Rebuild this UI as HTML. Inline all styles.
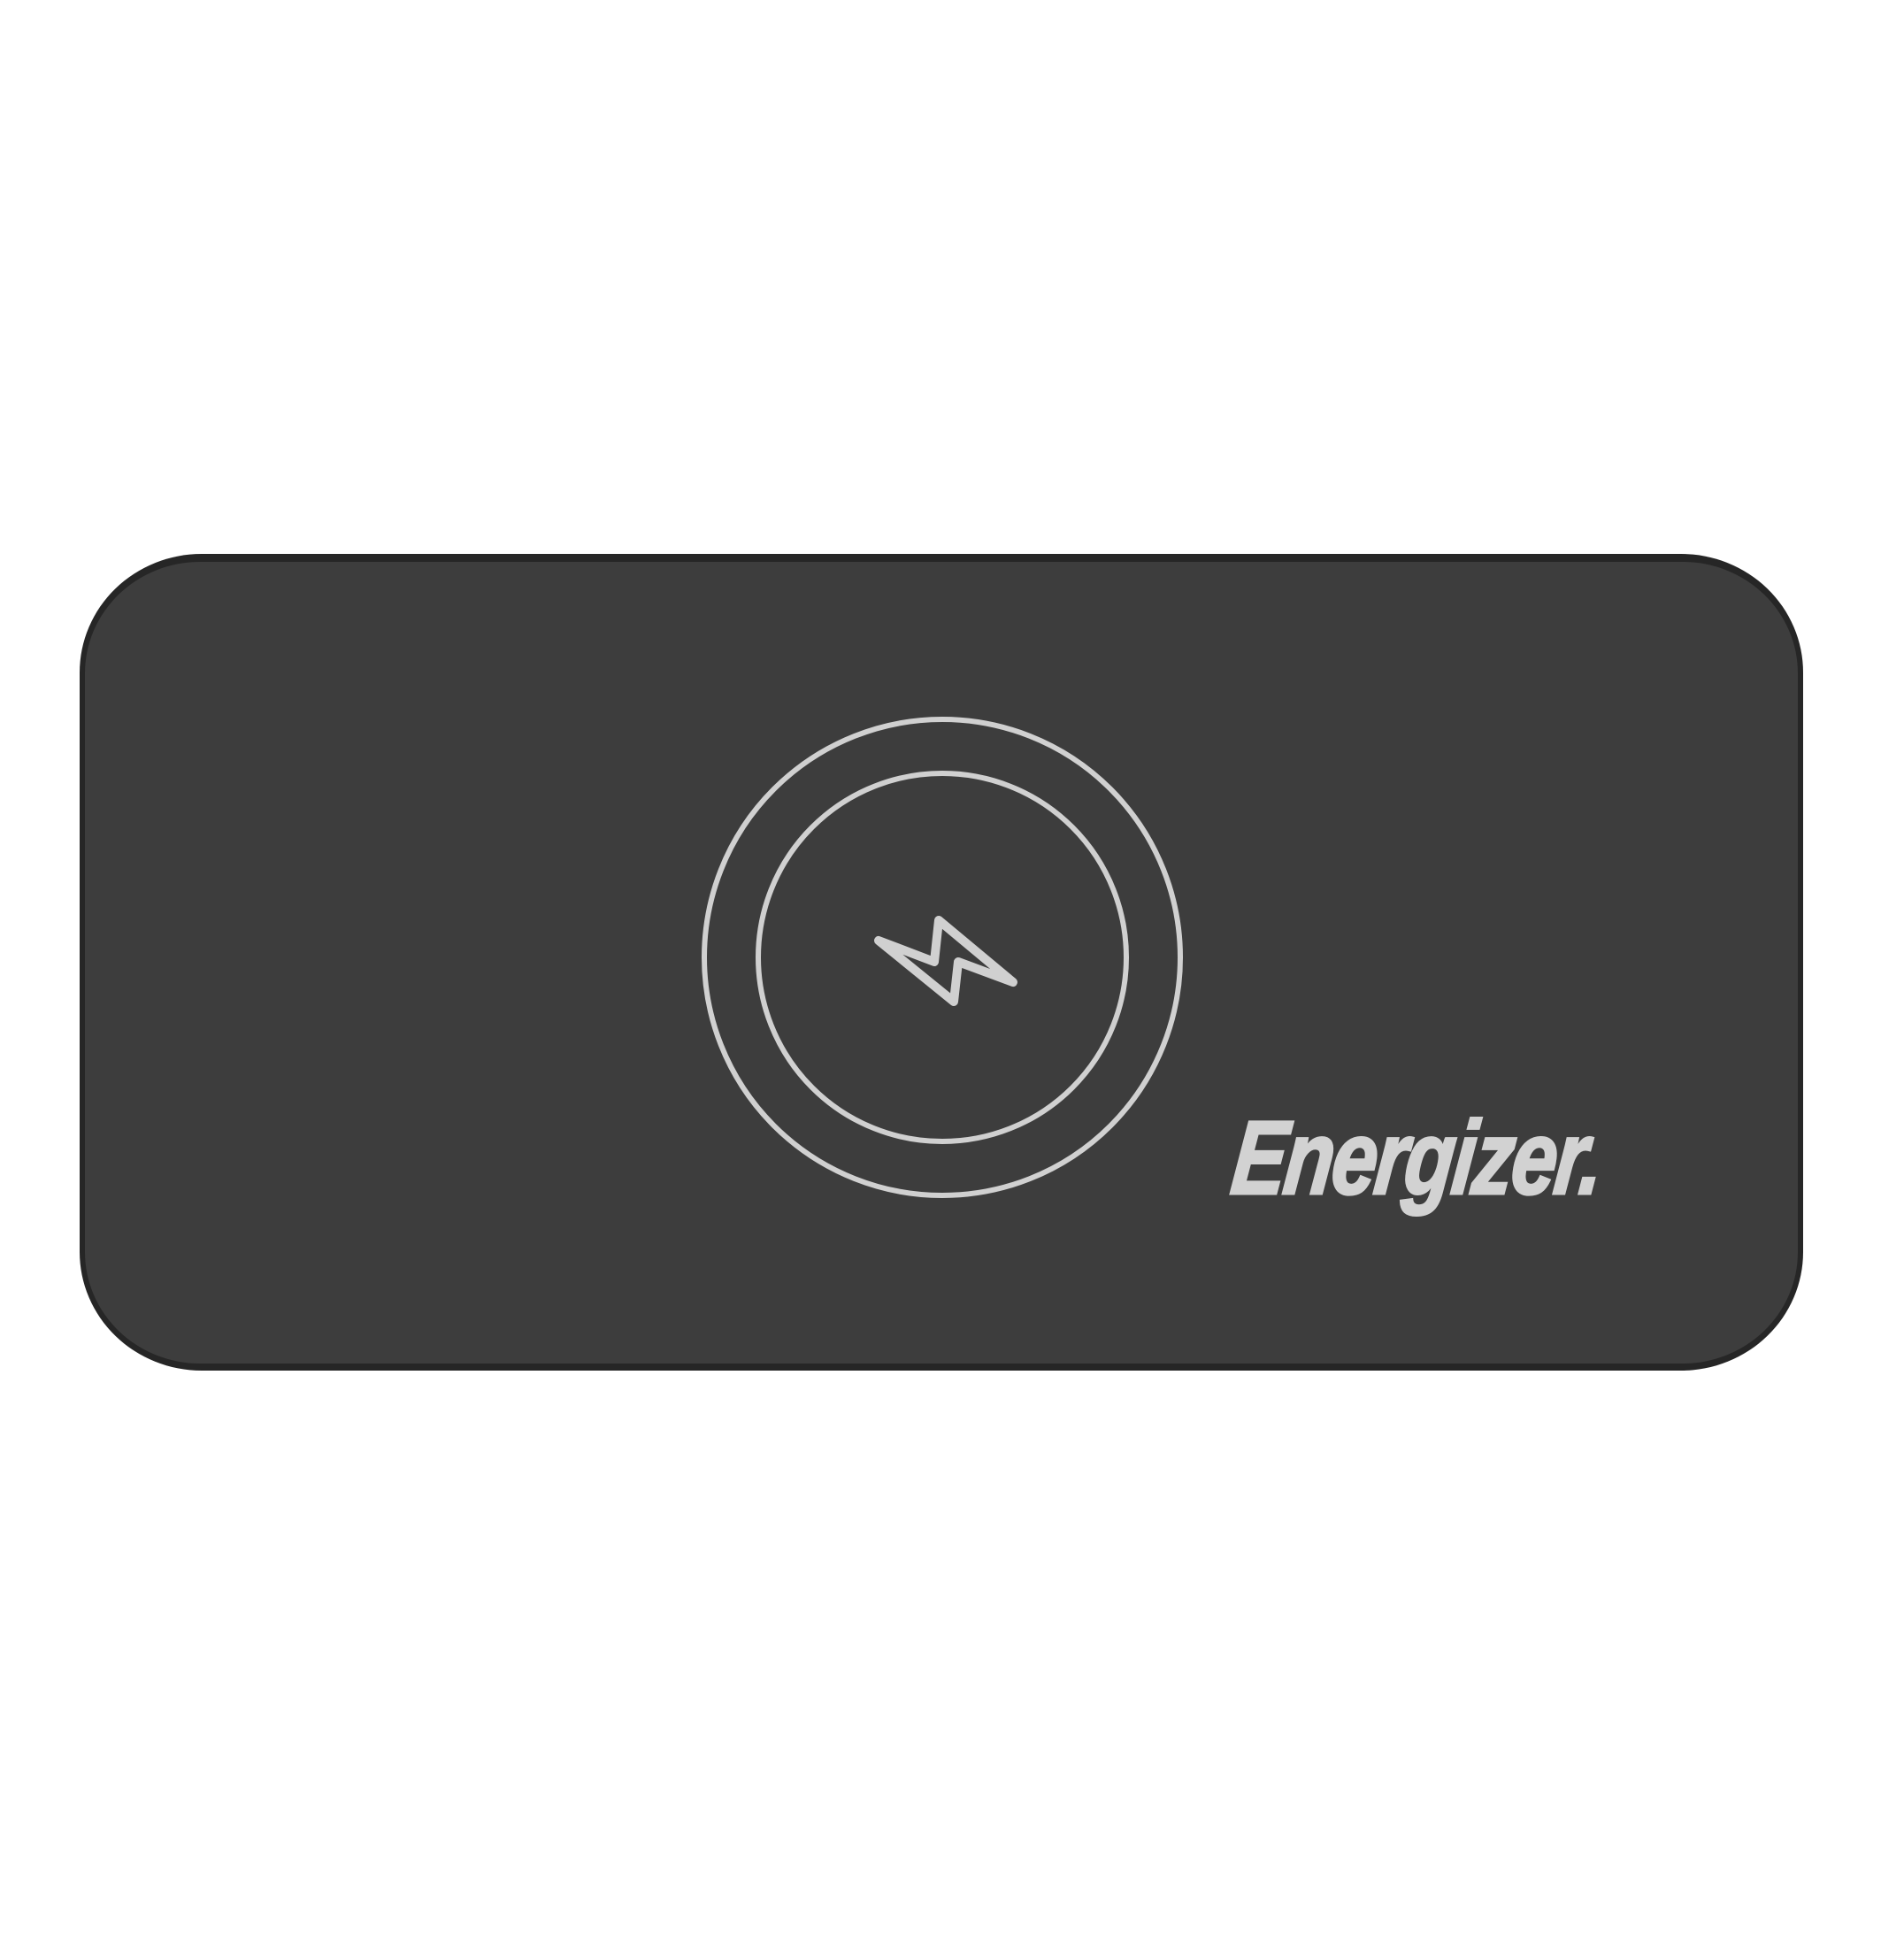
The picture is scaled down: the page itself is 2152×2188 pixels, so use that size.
<!DOCTYPE html>
<html><head><style>
html,body{margin:0;padding:0;background:#fff;}
body{width:2152px;height:2188px;position:relative;overflow:hidden;}
.shell{position:absolute;left:90px;top:626px;width:1948px;height:923px;border-radius:138px/134px;background:#262626;}
.face{position:absolute;left:96px;top:635px;width:1936px;height:906px;border-radius:130px/126px;background:#3d3d3d;}
.logo{position:absolute;left:1400px;top:1250px;font-family:"Liberation Sans",sans-serif;font-weight:bold;font-style:italic;font-size:118px;color:#d2d2d2;-webkit-text-stroke:3px #d2d2d2;letter-spacing:-3px;transform-origin:0 0;transform:scaleX(0.78) skewX(-8deg);white-space:nowrap;line-height:1;}
</style></head><body>
<div class="shell"></div>
<div class="face"></div>
<svg width="2152" height="2188" style="position:absolute;left:0;top:0">
<circle cx="1065" cy="1082" r="269" fill="none" stroke="#d0d0d0" stroke-width="6"/>
<circle cx="1065" cy="1082" r="208" fill="none" stroke="#d0d0d0" stroke-width="6"/>
<path d="M993 1063 L1056 1087 L1061 1040 L1145 1110 L1083 1087 L1078 1132 Z" fill="none" stroke="#d0d0d0" stroke-width="10" stroke-linejoin="round"/>
</svg>
<div class="logo">Energizer.</div>
</body></html>
